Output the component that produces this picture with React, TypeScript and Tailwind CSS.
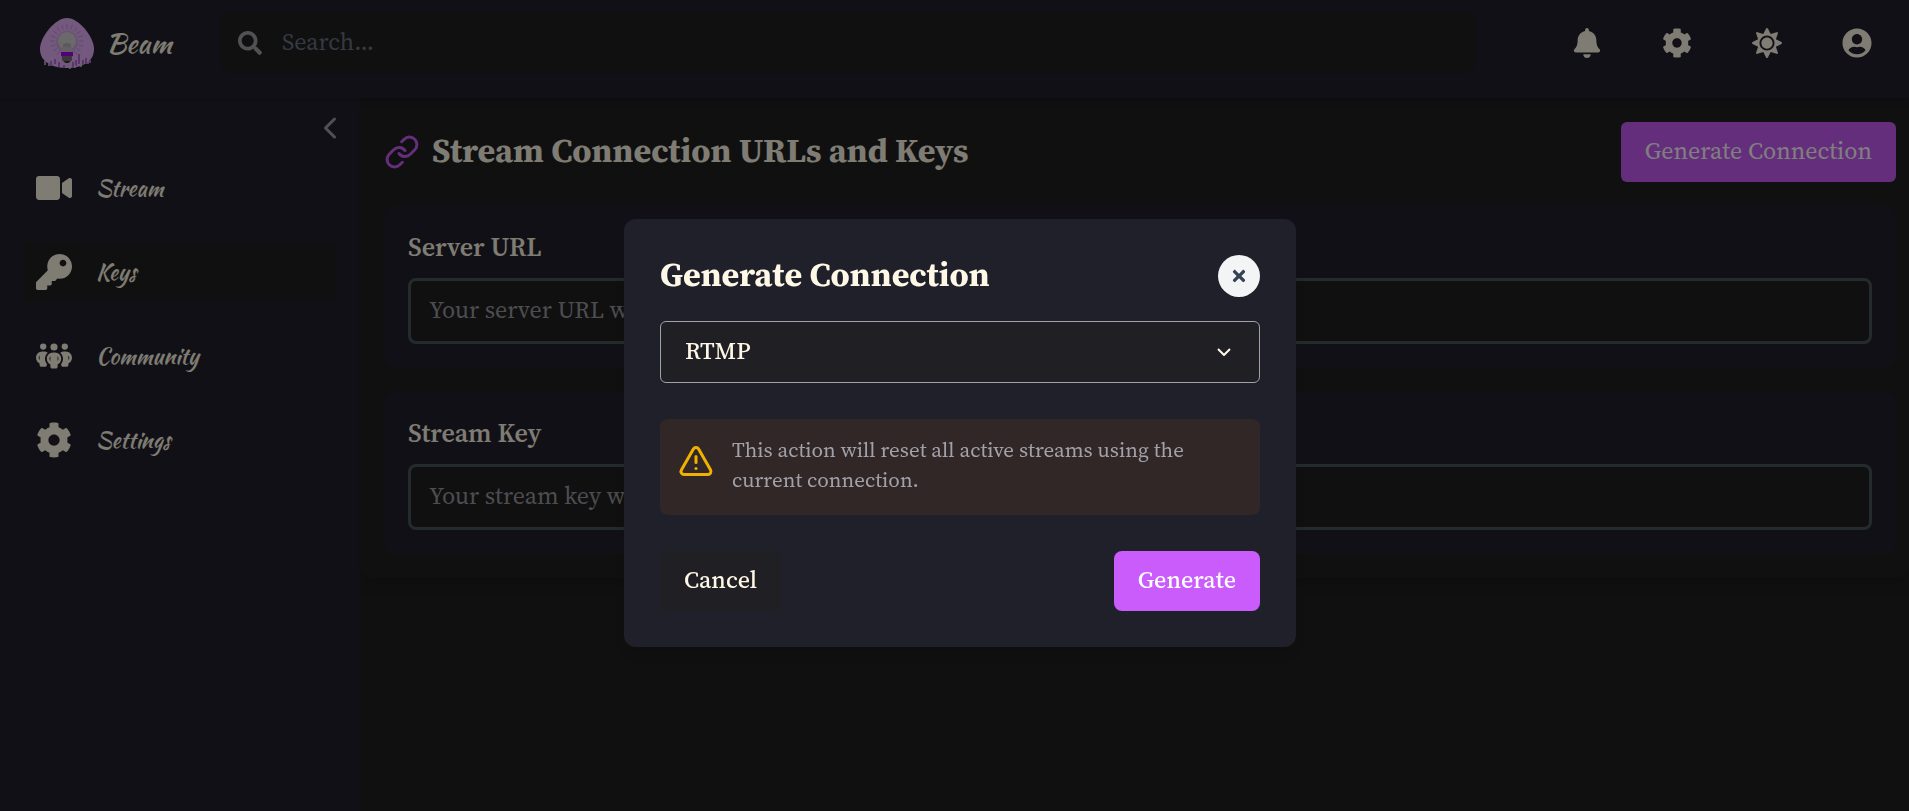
import type { ReactNode } from "react";
import { ChevronDown, ChevronLeft, Link, TriangleAlert } from "lucide-react";
import { FaBell, FaCog, FaKey, FaSearch, FaSun, FaTimes, FaUserCircle, FaVideo } from "react-icons/fa";
import { FaPeopleGroup } from "react-icons/fa6";

const script = "font-['Satisfy','Kaushan_Script','Liberation_Serif',cursive]";

function Logo() {
  const rays = Array.from({ length: 20 }, (_, i) => (i * Math.PI) / 10);
  return (
    <svg viewBox="0 0 54 51" className="h-[51px] w-[54px]" aria-hidden="true">
      <path d="M27 0C39 0 54 19 54 31C54 45 40 50 27 50S0 45 0 31C0 19 15 0 27 0Z" fill="#e9b2ff" />
      <g stroke="#c593da" strokeWidth="1">
        {rays.map((a) => (
          <line
            key={a}
            x1={27 + Math.cos(a) * 12}
            y1={23 + Math.sin(a) * 12}
            x2={27 + Math.cos(a) * 17}
            y2={23 + Math.sin(a) * 17}
          />
        ))}
      </g>
      <path
        d="M11 43v5M15 41v5M19 44v5M33 44v6M36 42v6M39 36v10M43 42v5M46 40v6M50 42v3M24 47v3"
        stroke="#b86ade"
        strokeWidth="2"
      />
      <path d="M5 43v4M9 46v2M13 40v4M30 47v4M41 44v5M48 42v4M17 45v3M35 47v3" stroke="#d9c5e0" strokeWidth="1.5" />
      <circle cx="27" cy="24" r="11" fill="#cfaadd" />
      <circle cx="27" cy="23" r="9" fill="#d6d3d8" />
      <path d="M23 26q4-2 8 0v3h-8z" fill="#b9b4bc" />
      <path d="M22 29h10v5H22z" fill="#c9c0cc" />
      <path d="M21 34h12v4H21z" fill="#a800f0" />
      <path d="M22 38h10v4l-3 3h-4l-3-3z" fill="#76707a" />
      <path d="M24 43h6l-2 2h-2z" fill="#333" />
    </svg>
  );
}

function IconButton({ label, children }: { label: string; children: ReactNode }) {
  return (
    <button type="button" aria-label={label} className="flex size-[54px] items-center justify-center text-[30px]">
      {children}
    </button>
  );
}

function NavItem({ icon, label, active }: { icon: ReactNode; label: string; active?: boolean }) {
  return (
    <li>
      <a href="#" className={`flex h-[60px] items-center gap-6 px-3 ${active ? "bg-[#202022]" : ""}`}>
        <span className="text-[36px]">{icon}</span>
        <span className={`text-[22px] ${script}`}>{label}</span>
      </a>
    </li>
  );
}

function KeyCard({ id, label, placeholder }: { id: string; label: string; placeholder: string }) {
  return (
    <div className="rounded-xl bg-[#22212d] p-6">
      <label htmlFor={id} className="mb-3 block pb-0.5 text-[26px] leading-[34px] font-semibold">
        {label}
      </label>
      <input
        id={id}
        readOnly
        placeholder={placeholder}
        className="h-[66px] w-full rounded-lg border-3 border-[#48565a] bg-[#202022] px-[18px] pb-1 text-[24px] placeholder:text-[#9a9aa0]"
      />
    </div>
  );
}

export default function App() {
  return (
    <div className="flex min-h-screen flex-col bg-[#202022] font-['Source_Serif_4','Noto_Serif','Liberation_Serif',serif] text-[#fff8e7]">
      <header className="z-10 flex h-[98px] items-start bg-[#22212d] pt-3 pr-[25px] pl-10 shadow-md">
        <div className="flex h-[62px] w-[180px] items-center gap-3">
          <Logo />
          <span className={`text-[28px] ${script}`}>Beam</span>
        </div>
        <label className="flex h-[62px] flex-1 items-center gap-5 rounded-xl bg-[#202022] px-[18px]">
          <FaSearch className="text-[24px] text-[#a1a1aa]" />
          <input
            type="search"
            aria-label="Search"
            placeholder="Search..."
            className="flex-1 pb-0.5 text-[24px] placeholder:text-[#6a7282]"
          />
        </label>
        <div className="ml-[84px] flex h-[62px] items-center gap-9">
          <IconButton label="Notifications"><FaBell /></IconButton>
          <IconButton label="Settings"><FaCog /></IconButton>
          <IconButton label="Theme"><FaSun /></IconButton>
          <IconButton label="Account"><FaUserCircle /></IconButton>
        </div>
      </header>

      <div className="flex flex-1">
        <aside className="w-[360px] bg-[#22212d] px-6 pt-3">
          <div className="mb-3 flex justify-end">
            <button type="button" aria-label="Collapse sidebar" className="-mr-3 text-[#a1a1aa]">
              <ChevronLeft size={36} />
            </button>
          </div>
          <ul className="flex flex-col gap-6">
            <NavItem icon={<FaVideo />} label="Stream" />
            <NavItem icon={<FaKey />} label="Keys" active />
            <NavItem icon={<FaPeopleGroup />} label="Community" />
            <NavItem icon={<FaCog />} label="Settings" />
          </ul>
        </aside>

        <main className="flex-1">
          <section className="flex flex-col gap-6 rounded-xl py-6 pr-[13px] pl-6 shadow-lg">
            <div className="flex items-center justify-between">
              <div className="flex items-center gap-3">
                <Link size={36} className="text-[#c95cfb]" />
                <h1 className="pb-1 text-[34px] leading-9 font-bold">Stream Connection URLs and Keys</h1>
              </div>
              <button type="button" className="h-[60px] rounded-md bg-[#c95cfb] px-6 pb-0.5 text-[24px] text-white">
                Generate Connection
              </button>
            </div>
            <KeyCard id="server-url" label="Server URL" placeholder="Your server URL will appear here" />
            <KeyCard id="stream-key" label="Stream Key" placeholder="Your stream key will appear here" />
          </section>
        </main>
      </div>

      <div className="fixed inset-0 z-20 flex items-center justify-center bg-black/50 pt-[55px] pl-[11px]">
        <div
          role="dialog"
          aria-modal="true"
          aria-labelledby="dialog-title"
          className="w-[672px] rounded-xl bg-[#20202b] p-9 shadow-lg"
        >
          <div className="mb-6 flex h-[42px] items-center justify-between">
            <h2 id="dialog-title" className="pb-1 text-[34px] leading-9 font-bold">
              Generate Connection
            </h2>
            <button
              type="button"
              aria-label="Close"
              className="flex size-[42px] items-center justify-center rounded-full bg-[#f3f4f6] text-[18px] text-[#364153]"
            >
              <FaTimes />
            </button>
          </div>
          <div className="relative mb-9">
            <select
              aria-label="Connection type"
              className="block h-[62px] w-full appearance-none rounded-md border border-[#a1a1aa] bg-[#201f24] px-6 pb-0.5 text-[24px] font-medium"
            >
              <option>RTMP</option>
            </select>
            <ChevronDown size={24} strokeLinecap="butt" className="pointer-events-none absolute top-[19px] right-6" />
          </div>
          <div className="mb-9 flex items-start gap-[18px] rounded-lg bg-[#322727] p-[18px]">
            <TriangleAlert size={36} className="mt-1.5 shrink-0 text-[#f0b100]" />
            <p className="-mt-0.5 mb-0.5 text-[21px] leading-[30px] text-[#a1a1aa]">
              This action will reset all active streams using the current connection.
            </p>
          </div>
          <div className="flex justify-between">
            <button type="button" className="h-[60px] rounded-lg bg-[#201f24] px-6 pb-0.5 text-[24px] font-medium">
              Cancel
            </button>
            <button type="button" className="h-[60px] rounded-lg bg-[#c95cfb] px-6 pb-0.5 text-[24px] font-medium text-white">
              Generate
            </button>
          </div>
        </div>
      </div>
    </div>
  );
}
